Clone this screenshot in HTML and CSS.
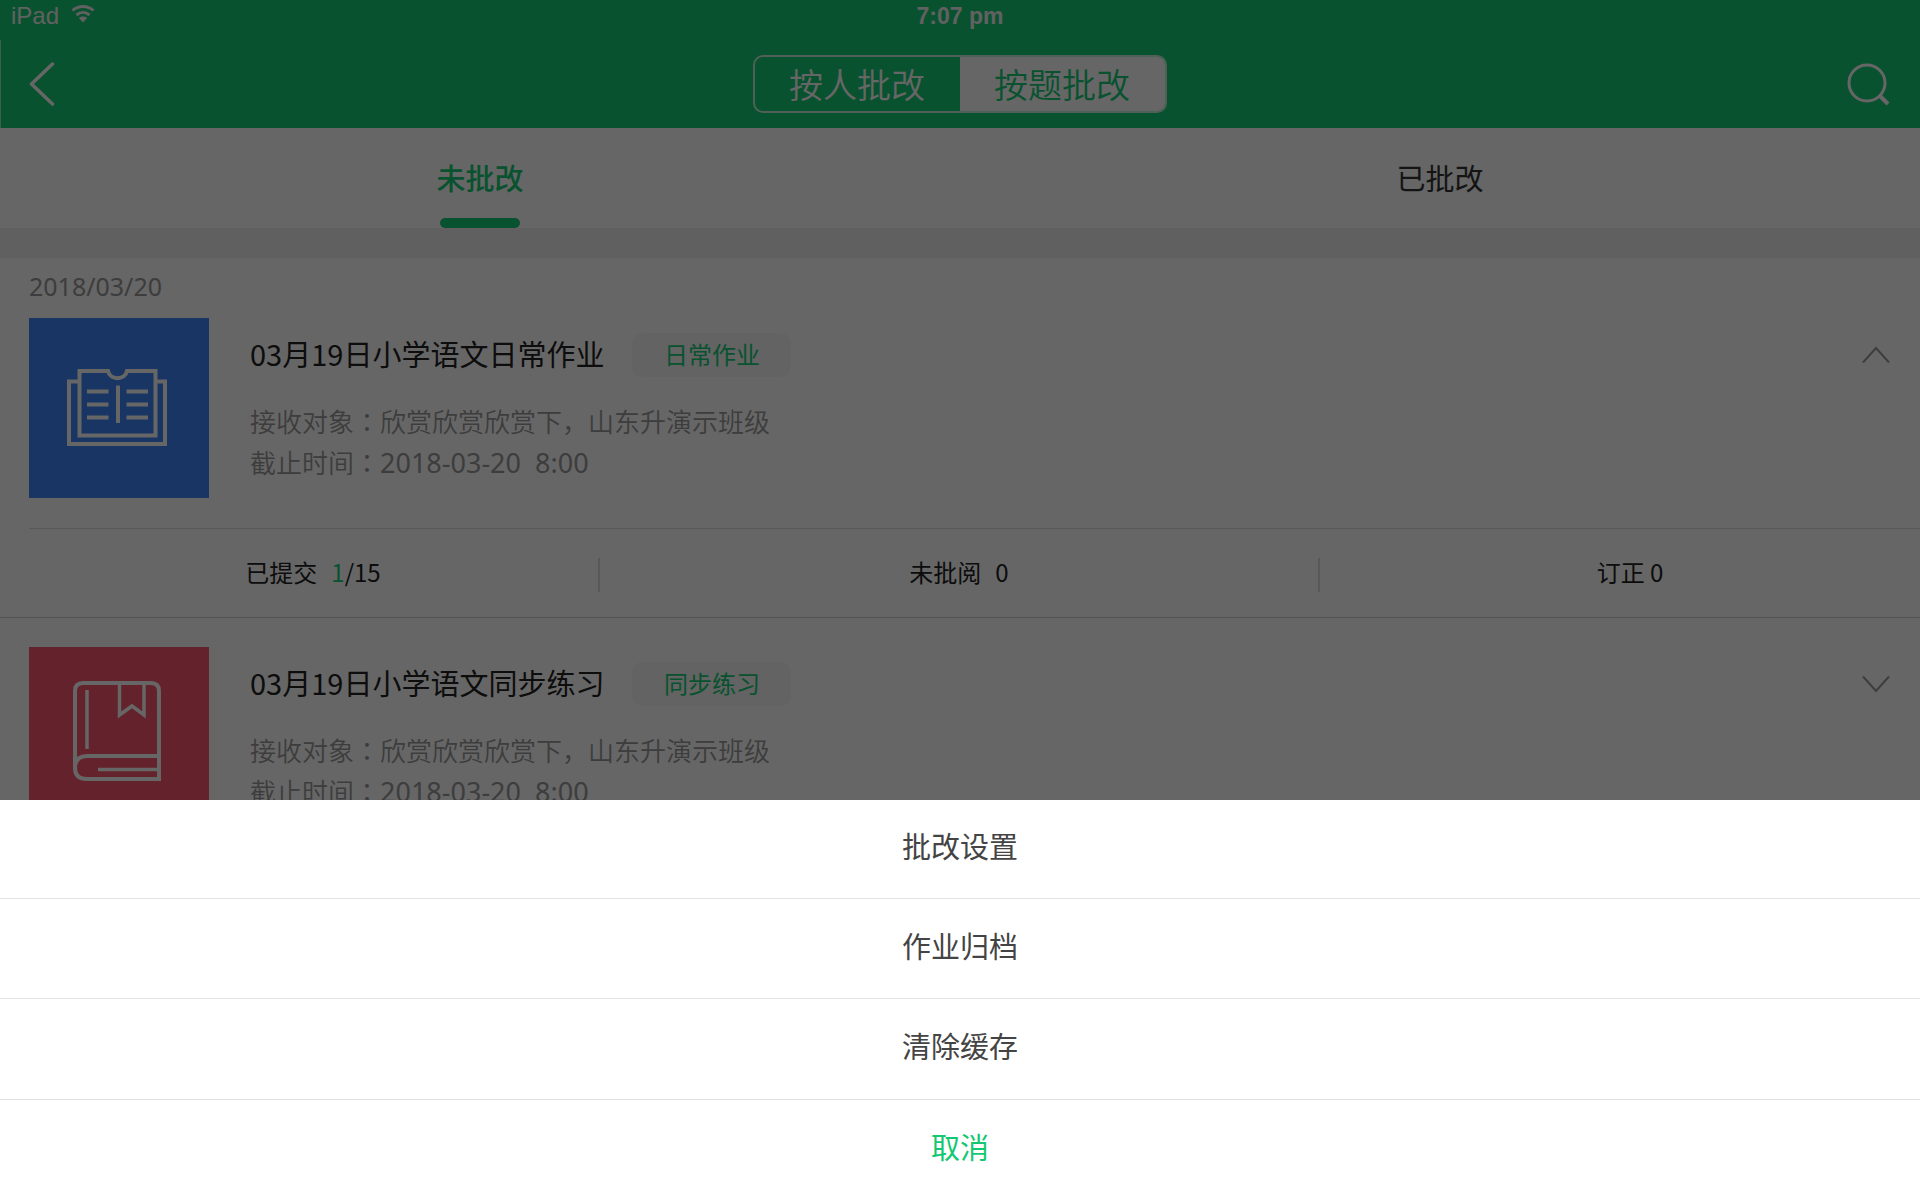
FILE: index.html
```html
<!DOCTYPE html>
<html lang="zh-CN">
<head>
<meta charset="utf-8">
<meta name="viewport" content="width=device-width, initial-scale=1">
<title>作业批改</title>
<link rel="stylesheet" href="styles.css">
</head>
<body>
<div class="page">
  <header class="header">
    <div class="status">
      <div class="device">
        <span>iPad</span>
        <svg class="wifi" width="24" height="20" viewBox="0 0 24 20" aria-hidden="true">
          <path d="M1.500 6.500C7.500 1 16.500 1 22.500 6.500" fill="none" stroke="currentColor" stroke-width="3"/>
          <path d="M5.500 11C9.500 7.500 14.500 7.500 18.500 11" fill="none" stroke="currentColor" stroke-width="3"/>
          <path d="M8 14C10 12 14 12 16 14L12 18.500Z" fill="currentColor"/>
        </svg>
      </div>
      <span class="clock">7:07 pm</span>
      <span></span>
    </div>
    <nav class="navbar">
      <button class="icon-button" type="button" aria-label="返回">
        <svg width="26" height="44" viewBox="0 0 26 44"><path d="M23.500 2L2.500 22L23.500 42" fill="none" stroke="currentColor" stroke-width="3.500" stroke-linecap="round" stroke-linejoin="round"/></svg>
      </button>
      <div class="segmented">
        <button class="segment" type="button">按人批改</button>
        <button class="segment segment-active" type="button">按题批改</button>
      </div>
      <button class="icon-button icon-button-end" type="button" aria-label="搜索">
        <svg width="43" height="43" viewBox="0 0 43 43"><circle cx="20" cy="20" r="18" fill="none" stroke="currentColor" stroke-width="3"/><path d="M33 33L41 41" stroke="currentColor" stroke-width="4"/></svg>
      </button>
    </nav>
  </header>

  <div class="tabs">
    <button class="tab tab-active" type="button">未批改</button>
    <button class="tab" type="button">已批改</button>
  </div>

  <main class="list">
    <time class="date" datetime="2018-03-20">2018/03/20</time>

    <article class="card">
      <div class="summary">
        <div class="tile tile-blue">
          <svg width="100" height="78" viewBox="0 0 100 78" fill="none" stroke="currentColor" stroke-width="4" aria-hidden="true">
            <path d="M12 12.500H2V75H98V12.500H88"/>
            <path d="M12.500 2H41C43 11.500 58 11.500 60 2H88.500V66.500H12.500Z"/>
            <path d="M51 16.500V54M20 22.500H41.500M20 35.500H41.500M20 48.500H41.500M59.500 22.500H81M59.500 35.500H81M59.500 48.500H81"/>
          </svg>
        </div>
        <div class="info">
          <div class="heading"><h2 class="title">03月19日小学语文日常作业</h2><span class="tag">日常作业</span></div>
          <p class="meta">接收对象<span class="colon" lang="zh-TW">：</span>欣赏欣赏欣赏下，山东升演示班级</p>
          <p class="meta">截止时间<span class="colon" lang="zh-TW">：</span><span class="deadline">2018-03-20&nbsp; 8:00</span></p>
        </div>
        <button class="toggle" type="button" aria-label="收起">
          <svg width="28" height="18" viewBox="0 0 28 18"><path d="M1 16.500L14 2L27 16.500" fill="none" stroke="currentColor" stroke-width="2"/></svg>
        </button>
      </div>
      <div class="stats">
        <div class="stat stat-first"><span class="label">已提交</span><span class="count">1</span>/15</div>
        <div class="stat"><span class="label">未批阅</span>0</div>
        <div class="stat stat-last">订正 0</div>
      </div>
    </article>

    <article class="card">
      <div class="summary summary-next">
        <div class="tile tile-red">
          <svg width="88" height="100" viewBox="0 0 88 100" fill="none" stroke="currentColor" stroke-width="4" aria-hidden="true">
            <path d="M2 87V10Q2 2 10 2H78Q86 2 86 10V98H14Q2 98 2 87Q2 75 14 75H86"/>
            <path d="M46.500 2V34L59 25L71 34V2M14 9V68M25 88.500H86" stroke-width="3.500"/>
          </svg>
        </div>
        <div class="info">
          <div class="heading"><h2 class="title">03月19日小学语文同步练习</h2><span class="tag">同步练习</span></div>
          <p class="meta">接收对象<span class="colon" lang="zh-TW">：</span>欣赏欣赏欣赏下，山东升演示班级</p>
          <p class="meta">截止时间<span class="colon" lang="zh-TW">：</span><span class="deadline">2018-03-20&nbsp; 8:00</span></p>
        </div>
        <button class="toggle" type="button" aria-label="展开">
          <svg width="28" height="18" viewBox="0 0 28 18"><path d="M1 1.500L14 16L27 1.500" fill="none" stroke="currentColor" stroke-width="2"/></svg>
        </button>
      </div>
    </article>
  </main>
</div>

<div class="overlay">
  <div class="sheet" role="dialog" aria-label="更多操作">
    <button class="action" type="button">批改设置</button>
    <button class="action" type="button">作业归档</button>
    <button class="action" type="button">清除缓存</button>
    <button class="action action-cancel" type="button">取消</button>
  </div>
</div>
</body>
</html>
```
FILE: styles.css
```css
:root {
  --green: #14cd75;
  --line: #dcdcdc;
}

* {
  box-sizing: border-box;
}

body {
  margin: 0;
  background: #fff;
  color: #333;
  font-family: "Noto Sans CJK SC", sans-serif;
}

button {
  margin: 0;
  padding: 0;
  border: 0;
  background: none;
  color: inherit;
  font: inherit;
  cursor: pointer;
}

svg {
  display: block;
}

.page {
  height: 100vh;
  overflow: hidden;
}

/* Header */
.header {
  background: var(--green);
  color: #fff;
}

.status {
  display: grid;
  grid-template-columns: 1fr auto 1fr;
  height: 40px;
  padding: 4px 11px 0;
  color: #f2f2f2;
  font: 24px/24px "Liberation Sans", sans-serif;
}

.device {
  display: flex;
  gap: 12px;
}

.clock {
  font-size: 23px;
  font-weight: 700;
}

.navbar {
  display: grid;
  grid-template-columns: 1fr 414px 1fr;
  align-items: center;
  height: 88px;
  padding: 0 30px 0 28px;
  border-left: 1px solid #a1ebc8;
}

.icon-button {
  justify-self: start;
}

.icon-button-end {
  justify-self: end;
}

.segmented {
  display: grid;
  grid-template-columns: 1fr 1fr;
  height: 58px;
  border: 2px solid #c4f2dc;
  border-radius: 10px;
  overflow: hidden;
}

.segment {
  font-size: 34px;
  font-weight: 350;
  line-height: 54px;
}

.segment-active {
  background: #fff;
  color: var(--green);
}

/* Tabs */
.tabs {
  display: grid;
  grid-template-columns: 1fr 1fr;
  height: 100px;
}

.tab {
  display: flex;
  flex-direction: column;
  align-items: center;
  justify-content: space-between;
  padding-top: 27px;
  font-size: 29px;
  line-height: 44px;
}

.tab-active {
  color: var(--green);
  font-weight: 500;
}

.tab-active::after {
  content: "";
  width: 80px;
  height: 10px;
  border-radius: 5px;
  background: var(--green);
}

/* Assignment list */
.list {
  border-top: 30px solid #f0f0f0;
}

.date {
  display: block;
  height: 60px;
  padding-left: 29px;
  color: #999;
  font: 25px/56px "Noto Sans", sans-serif;
}

.card {
  border-bottom: 1px solid #d0d0d0;
}

.summary {
  display: flex;
  gap: 41px;
  margin-left: 29px;
  padding: 0 30px 30px 0;
  border-bottom: 1px solid var(--line);
}

.summary-next {
  padding-top: 29px;
}

.tile {
  display: grid;
  flex: none;
  place-items: center;
  width: 180px;
  height: 180px;
  padding-right: 5px;
  color: #fff;
}

.tile-blue {
  background: #3c85fa;
}

.tile-red {
  padding-bottom: 12px;
  background: #fa556e;
}

.info {
  flex: 1;
  padding-top: 15px;
}

.heading {
  display: flex;
  gap: 28px;
  margin-bottom: 23px;
}

.title {
  margin: 0;
  color: #222;
  font-size: 29px;
  font-weight: 400;
  line-height: 41px;
}

.tag {
  width: 159px;
  height: 44px;
  border-radius: 10px;
  background: #f7f7f7;
  color: var(--green);
  font-size: 24px;
  line-height: 41px;
  text-align: center;
}

.meta {
  margin: 0;
  color: #999;
  font-size: 26px;
  font-weight: 350;
  line-height: 41px;
}

.colon {
  font-family: "Noto Sans CJK TC", sans-serif;
}

.deadline {
  font: 400 27px/40px "Noto Sans", sans-serif;
}

.toggle {
  align-self: flex-start;
  padding-top: 28px;
  color: #999;
}

.stats {
  display: grid;
  grid-template-columns: 5fr 6fr 5fr;
  align-items: center;
  height: 88px;
  padding-top: 4px;
}

.stat {
  height: 34px;
  border-right: 2px solid var(--line);
  color: #222;
  font-size: 24px;
  line-height: 28px;
  text-align: center;
}

.stat-first {
  padding-left: 28px;
}

.stat-last {
  padding-left: 20px;
  border-right: 0;
}

.label {
  margin-right: 14px;
}

.count {
  color: var(--green);
}

/* Action sheet */
.overlay {
  position: fixed;
  inset: 0;
  display: flex;
  flex-direction: column;
  justify-content: flex-end;
  background: rgba(0, 0, 0, 0.6);
}

.sheet {
  display: grid;
  grid-template-rows: 99px 100px 101px 100px;
  background: #fff;
}

.action {
  padding-bottom: 8px;
  border-bottom: 1px solid #e2e2e2;
  color: #444;
  font-size: 29px;
}

.action-cancel {
  border-bottom: 0;
  color: #14c873;
}
```
